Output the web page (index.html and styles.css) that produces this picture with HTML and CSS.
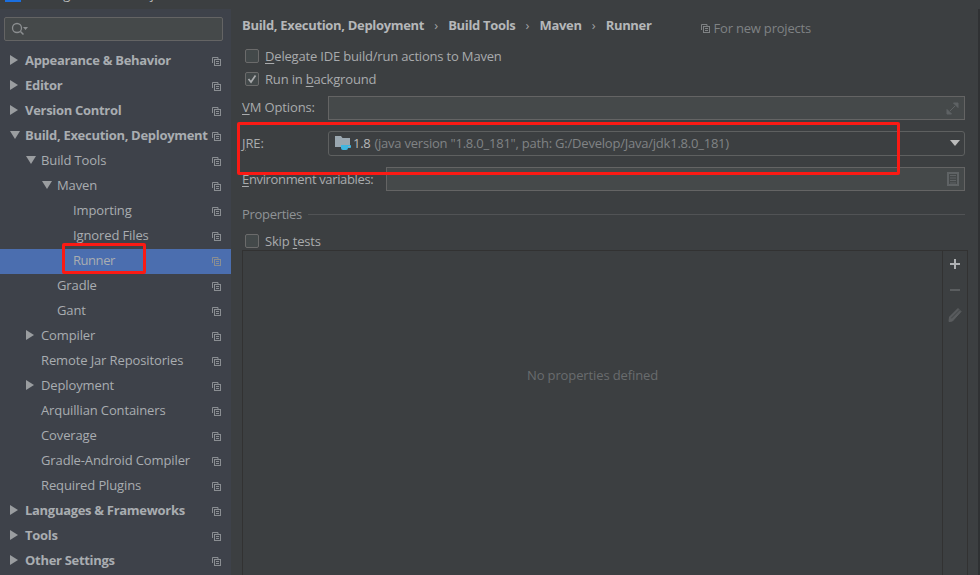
FILE: index.html

```html
<!DOCTYPE html>
<html lang="en">
<head>
  <meta charset="UTF-8" />
  <title>Settings for New Projects</title>
  <link rel="stylesheet" href="styles.css">
</head>
<body>
  <svg class="defs" width="0" height="0">
    <symbol id="copy" viewBox="0 0 9 9">
      <path d="M.5 6V.5H6v1.500" fill="none" stroke="currentColor"/>
      <rect x="2.500" y="2.500" width="6" height="6" fill="none" stroke="currentColor"/>
      <path d="M4 4.500h3M4 6.500h3" stroke="currentColor"/>
    </symbol>
  </svg>

  <div class="titlebar">
    <span class="app-icon"></span>
    <span class="title">Settings for New Projects</span>
  </div>

  <div class="window">
    <div class="sidebar">
      <div class="search">
        <svg width="20" height="16" viewBox="0 0 20 16">
          <circle cx="7" cy="7" r="4.5" fill="none" stroke="#8b8e90" stroke-width="1.3"/>
          <path d="M10.5 10.5l3 3" stroke="#8b8e90" stroke-width="1.5"/>
          <path d="M13 6h5l-2.500 3z" fill="#8b8e90"/>
        </svg>
      </div>

      <div class="tree">
        <div class="row top"><span class="arrow right"></span><span class="label">Appearance &amp; Behavior</span><svg class="copy"><use href="#copy"/></svg></div>
        <div class="row top"><span class="arrow right"></span><span class="label">Editor</span><svg class="copy"><use href="#copy"/></svg></div>
        <div class="row top"><span class="arrow right"></span><span class="label">Version Control</span><svg class="copy"><use href="#copy"/></svg></div>
        <div class="row top"><span class="arrow down"></span><span class="label">Build, Execution, Deployment</span><svg class="copy"><use href="#copy"/></svg></div>
        <div class="row lvl1"><span class="arrow down"></span><span class="label">Build Tools</span><svg class="copy"><use href="#copy"/></svg></div>
        <div class="row lvl2"><span class="arrow down"></span><span class="label">Maven</span><svg class="copy"><use href="#copy"/></svg></div>
        <div class="row lvl3"><span class="label">Importing</span><svg class="copy"><use href="#copy"/></svg></div>
        <div class="row lvl3"><span class="label">Ignored Files</span><svg class="copy"><use href="#copy"/></svg></div>
        <div class="row lvl3 selected"><span class="label">Runner</span><svg class="copy"><use href="#copy"/></svg></div>
        <div class="row lvl2"><span class="label">Gradle</span><svg class="copy"><use href="#copy"/></svg></div>
        <div class="row lvl2"><span class="label">Gant</span><svg class="copy"><use href="#copy"/></svg></div>
        <div class="row lvl1"><span class="arrow right"></span><span class="label">Compiler</span><svg class="copy"><use href="#copy"/></svg></div>
        <div class="row lvl1"><span class="label">Remote Jar Repositories</span><svg class="copy"><use href="#copy"/></svg></div>
        <div class="row lvl1"><span class="arrow right"></span><span class="label">Deployment</span><svg class="copy"><use href="#copy"/></svg></div>
        <div class="row lvl1"><span class="label">Arquillian Containers</span><svg class="copy"><use href="#copy"/></svg></div>
        <div class="row lvl1"><span class="label">Coverage</span><svg class="copy"><use href="#copy"/></svg></div>
        <div class="row lvl1"><span class="label">Gradle-Android Compiler</span><svg class="copy"><use href="#copy"/></svg></div>
        <div class="row lvl1"><span class="label">Required Plugins</span><svg class="copy"><use href="#copy"/></svg></div>
        <div class="row top"><span class="arrow right"></span><span class="label">Languages &amp; Frameworks</span><svg class="copy"><use href="#copy"/></svg></div>
        <div class="row top"><span class="arrow right"></span><span class="label">Tools</span><svg class="copy"><use href="#copy"/></svg></div>
        <div class="row top"><span class="arrow right"></span><span class="label">Other Settings</span><svg class="copy"><use href="#copy"/></svg></div>
      </div>
    </div>

    <div class="main">
      <div class="crumbs">
        <b>Build, Execution, Deployment</b><span class="sep">›</span>
        <b>Build Tools</b><span class="sep">›</span>
        <b>Maven</b><span class="sep">›</span>
        <b>Runner</b>
        <span class="scope"><svg class="copy"><use href="#copy"/></svg>For new projects</span>
      </div>

      <div class="check first"><span class="box"></span><span><u>D</u>elegate IDE build/run actions to Maven</span></div>
      <div class="check second">
        <span class="box">
          <svg width="14" height="14" viewBox="0 0 14 14"><path d="M3.500 7l2.500 3 4.500-6.500" fill="none" stroke="#a9abad" stroke-width="1.700"/></svg>
        </span>
        <span>Run in <u>b</u>ackground</span>
      </div>

      <div class="field vm">
        <label class="name"><u>V</u>M Options:</label>
        <div class="input">
          <svg class="end-icon" width="13" height="13" viewBox="0 0 13 13">
            <path d="M7.500 1H12v4.500zM1 7.500V12h4.500zM9 4L4 9" fill="#5f6365" stroke="#5f6365"/>
          </svg>
        </div>
      </div>

      <div class="field jre">
        <label class="name"><u>J</u>RE:</label>
        <div class="combo">
          <svg class="folder" width="16" height="15" viewBox="0 0 16 15">
            <path d="M0 0h6l1.500 2H15v9H0z" fill="#9aa7b0"/>
            <path d="M6 9h7v3a2 2 0 0 1-2 2H8a2 2 0 0 1-2-2z" fill="#40b6e0"/>
            <path d="M13 9.500h2.500v2H13" fill="none" stroke="#40b6e0"/>
          </svg>
          <span class="version">1.8</span>
          <span class="path">(java version "1.8.0_181", path: G:/Develop/Java/jdk1.8.0_181)</span>
          <span class="caret"></span>
        </div>
      </div>

      <div class="field env">
        <label class="name"><u>E</u>nvironment variables:</label>
        <div class="input">
          <svg class="end-icon" width="12" height="14" viewBox="0 0 12 14">
            <path d="M3 3.500h6M3 6h6M3 8.500h6M3 11h6" fill="none" stroke="#5f6365"/>
            <rect x="1" y="1" width="10" height="12" fill="none" stroke="#5f6365" stroke-width="2"/>
          </svg>
        </div>
      </div>

      <div class="section"><span>Properties</span><span class="line"></span></div>
      <div class="check skip"><span class="box"></span><span>Skip <u>t</u>ests</span></div>

      <div class="table">
        <div class="empty">No properties defined</div>
        <div class="toolbar">
          <svg width="12" height="12" viewBox="0 0 12 12"><path d="M6 1v10M1 6h10" stroke="#afb1b3" stroke-width="2"/></svg>
          <svg width="12" height="12" viewBox="0 0 12 12"><path d="M1 6h10" stroke="#5a5d5f" stroke-width="2"/></svg>
          <svg class="pencil" width="15" height="15" viewBox="0 0 15 15"><path d="M1 14.500l.5-4.500L10 1.500l1 1-8.500 8.500 1 1 8.500-8.500 1 1L4.500 14z" fill="#5a5d5f" stroke="#5a5d5f"/></svg>
        </div>
      </div>
    </div>
  </div>

  <div class="mark mark-jre"></div>
  <div class="mark mark-runner"></div>
</body>
</html>
```

FILE: styles.css

```css
body {
  font-family: "Open Sans", "Noto Sans", sans-serif;
  font-size: 13px;
  letter-spacing: -0.12px;
  color: #bbbbbb;
  background-color: #3c3f41;
  margin: 0;
  width: 980px;
  height: 575px;
  overflow: hidden;
  position: relative;
}
u {
  text-underline-offset: 2px;
}
.defs {
  display: block;
}
.titlebar {
  height: 9px;
  overflow: hidden;
  display: flex;
}
.app-icon {
  width: 12px;
  height: 10px;
  margin: -12px 0 0 5px;
  border: 2px solid #1a6fe0;
}
.title {
  margin: -15px 0 0 8px;
  color: #bbbbbb;
}
.window {
  display: flex;
  height: 566px;
  border-right: 2px solid #2f3133;
}
.sidebar {
  width: 231px;
  flex: none;
  background-color: #3e424a;
  padding-top: 8px;
}
.search {
  height: 22px;
  margin: 0 8px 8px 4px;
  background-color: #45494a;
  border: 1px solid #646464;
  border-radius: 2px;
  padding-left: 5px;
  display: flex;
  align-items: center;
}
.row {
  height: 21px;
  padding-bottom: 4px;
  display: flex;
  align-items: center;
  position: relative;
  color: #a9adb1;
}
.row.top {
  padding-left: 25px;
  font-weight: 700;
  letter-spacing: -0.3px;
}
.row.lvl1 {
  padding-left: 41px;
}
.row.lvl2 {
  padding-left: 57px;
}
.row.lvl3 {
  padding-left: 73px;
}
.row.selected {
  background-color: #4b6eaf;
  letter-spacing: -0.45px;
}
.row .copy {
  position: absolute;
  left: 212px;
  top: 8px;
  color: #8a8e92;
}
.copy {
  width: 9px;
  height: 9px;
}
.arrow {
  width: 0;
  height: 0;
  position: absolute;
  margin-left: -15px;
}
.arrow.right {
  border-left: 8px solid #9a9da0;
  border-top: 5px solid transparent;
  border-bottom: 5px solid transparent;
}
.arrow.down {
  border-top: 8px solid #9a9da0;
  border-left: 5px solid transparent;
  border-right: 5px solid transparent;
}
.main {
  flex: 1;
  min-width: 0;
  padding: 0 13px 0 11px;
  display: flex;
  flex-direction: column;
}
.crumbs {
  height: 32px;
  margin-bottom: 2px;
  display: flex;
  align-items: center;
}
.crumbs b {
  font-weight: 700;
  letter-spacing: -0.32px;
  color: #b5b7b9;
}
.sep {
  width: 24px;
  text-align: center;
  color: #a0a2a4;
}
.scope {
  margin-left: 49px;
  padding-top: 6px;
  color: #7f8284;
  display: flex;
  align-items: center;
  gap: 4px;
  letter-spacing: -0.2px;
}
.check {
  height: 20px;
  display: flex;
  align-items: center;
  gap: 6px;
  padding-left: 3px;
  color: #a9abad;
  letter-spacing: -0.18px;
}
.check.first {
  margin-top: 3px;
}
.check.second {
  margin-top: 3px;
}
.check.skip {
  height: 19px;
  margin-top: 7px;
}
.box {
  width: 12px;
  height: 12px;
  border: 1px solid #6b6b6b;
  border-radius: 2px;
  background-color: #43494a;
  display: flex;
}
.box svg {
  margin: -1px;
}
.field {
  display: flex;
  align-items: center;
  color: #a9abad;
}
.name {
  flex: none;
  width: 86px;
  padding-bottom: 2px;
}
.field.vm {
  margin-top: 7px;
  height: 24px;
}
.field.jre {
  margin-top: 11px;
  height: 25px;
}
.field.env {
  margin-top: 11px;
  height: 24px;
}
.field.env .name {
  width: 144px;
  padding-bottom: 0;
  letter-spacing: -0.35px;
}
.input {
  flex: 1;
  height: 22px;
  background-color: #45494a;
  border: 1px solid #646464;
  display: flex;
  align-items: center;
  justify-content: flex-end;
  padding-right: 5px;
}
.combo {
  flex: 1;
  height: 21px;
  padding: 0 0 2px 6px;
  border: 1px solid #5e6060;
  border-radius: 3px;
  display: flex;
  align-items: center;
}
.folder {
  flex: none;
  margin: 2px 2px 0 0;
}
.version {
  color: #b5b7b9;
  margin-right: 4px;
  letter-spacing: -0.3px;
}
.path {
  color: #808385;
  letter-spacing: -0.22px;
}
.caret {
  margin-left: auto;
  margin-right: 4px;
  width: 0;
  height: 0;
  border-top: 6px solid #bbbbbb;
  border-left: 5px solid transparent;
  border-right: 5px solid transparent;
}
.section {
  margin-top: 13px;
  height: 20px;
  display: flex;
  align-items: center;
  gap: 6px;
  color: #8f9396;
  letter-spacing: -0.3px;
}
.line {
  flex: 1;
  height: 1px;
  background-color: #515355;
}
.table {
  flex: 1;
  margin-right: -3px;
  border: 1px solid #323232;
  border-bottom: 0;
  display: flex;
}
.empty {
  flex: 1;
  padding-top: 115px;
  text-align: center;
  color: #696c6e;
}
.toolbar {
  width: 24px;
  border-left: 1px solid #323232;
  display: flex;
  flex-direction: column;
  align-items: center;
  gap: 14px;
  padding-top: 7px;
}
.pencil {
  margin-top: -3px;
}
.mark {
  position: absolute;
  border: 3px solid #fb1a14;
  border-radius: 2px;
  box-sizing: border-box;
}
.mark-jre {
  left: 237px;
  top: 122px;
  width: 663px;
  height: 53px;
}
.mark-runner {
  left: 62px;
  top: 243px;
  width: 84px;
  height: 31px;
}
```
